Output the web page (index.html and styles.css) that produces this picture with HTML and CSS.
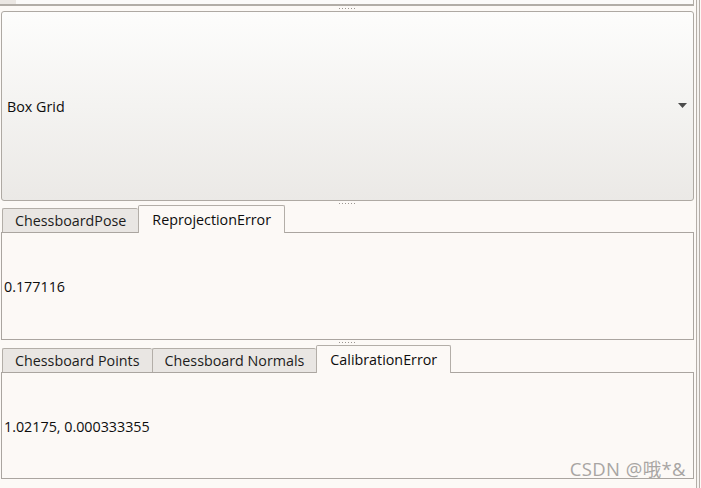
FILE: index.html
```html
<!DOCTYPE html>
<html>
<head>
<meta charset="utf-8">
<link rel="stylesheet" href="styles.css">
</head>
<body>
<div class="window">
  <div class="main">
    <div class="topbox"><div class="handle-patch"></div></div>
    <div class="splitter"><span class="dots"></span></div>
    <div class="combo">
      <span class="combo-text">Box Grid</span>
      <svg class="arrow" width="9" height="5" viewBox="0 0 9 5"><path d="M0 0H9L4.5 5Z" fill="#4c4c4c"/></svg>
    </div>
    <div class="splitter"><span class="dots"></span></div>
    <div class="tabwidget tw1">
      <div class="tabbar">
        <div class="tab">ChessboardPose</div>
        <div class="tab active">ReprojectionError</div>
      </div>
      <div class="pane"><span class="value">0.177116</span></div>
    </div>
    <div class="splitter"><span class="dots"></span></div>
    <div class="tabwidget tw2">
      <div class="tabbar">
        <div class="tab">Chessboard Points</div>
        <div class="tab">Chessboard Normals</div>
        <div class="tab active">CalibrationError</div>
      </div>
      <div class="pane"><span class="value">1.02175, 0.000333355</span>
        <span class="watermark">CSDN @哦*&amp;</span>
      </div>
    </div>
  </div>
  <div class="side"></div>
</div>
</body>
</html>
```
FILE: styles.css
```css
html, body {
  margin: 0;
  padding: 0;
  background: #fcf9f6;
}
.window {
  width: 701px;
  height: 488px;
  display: flex;
  font-family: "Open Sans", "Noto Sans CJK SC", sans-serif;
  font-size: 14.3px;
  color: #111;
  overflow: hidden;
}
.main {
  width: 694px;
  flex: none;
  display: flex;
  flex-direction: column;
}
.side {
  flex: none;
  width: 4px;
  box-sizing: border-box;
  border-left: 1px solid #b4aea8;
  margin-left: 2px;
  border-right: 1px solid #b4aea8;
  margin-right: 1px;
  background: #f6f3f0;
}
.topbox {
  height: 6px;
  box-sizing: border-box;
  border-bottom: 2px solid #b2ada7;
  border-right: 1px solid #b2ada7;
  background: #fbfaf9;
}
.handle-patch {
  width: 16px;
  height: 4px;
  background: #ebe7e3;
}
.splitter {
  height: 5px;
  display: flex;
  align-items: center;
  justify-content: center;
}
.dots {
  width: 17px;
  height: 1px;
  background-image: linear-gradient(to right, #9a9590 1px, transparent 1px);
  background-size: 3px 1px;
}
.combo {
  height: 190px;
  flex: none;
  margin-left: 1px;
  box-sizing: border-box;
  border: 1px solid #aea9a3;
  border-radius: 3px;
  background: linear-gradient(#fdfdfc, #ebe9e6);
  display: flex;
  align-items: center;
  justify-content: space-between;
  padding: 0 6px 0 5px;
}
.combo-text {
  color: #0d0d0d;
}
.arrow {
  margin-top: -1px;
}
.tabwidget {
  display: flex;
  flex-direction: column;
  margin-left: 1px;
  flex: none;
}
.tw1 { height: 135px; margin-top: -1px; }
.tw2 { height: 134px; }
.tabbar {
  display: flex;
  align-items: flex-end;
  height: 27px;
  flex: none;
  padding-left: 1px;
  position: relative;
  z-index: 1;
}
.tab {
  height: 24px;
  box-sizing: border-box;
  border: 1px solid #b3aea8;
  border-bottom: none;
  border-right: none;
  background: #e9e6e3;
  padding: 0 12px;
  display: flex;
  align-items: center;
  color: #1c1c1c;
  border-radius: 2px 2px 0 0;
}
.tab.active {
  height: 28px;
  background: #fcf9f6;
  border-right: 1px solid #b3aea8;
  margin-bottom: -1px;
  padding: 0 13px 1px;
  color: #0d0d0d;
}
.tab.active + .tab { border-left: none; }
.pane {
  flex: 1;
  box-sizing: border-box;
  border: 1px solid #aaa5a0;
  background: #fcf9f6;
  display: flex;
  align-items: center;
  padding-left: 2px;
  position: relative;
}
.value {
  color: #0d0d0d;
  margin-top: 1px;
}
.watermark {
  position: absolute;
  right: 7px;
  bottom: -3px;
  color: #a8a5a3;
  font-size: 18.5px;
  letter-spacing: 0.4px;
  font-family: "Open Sans", "Noto Sans CJK SC", sans-serif;
}
```
